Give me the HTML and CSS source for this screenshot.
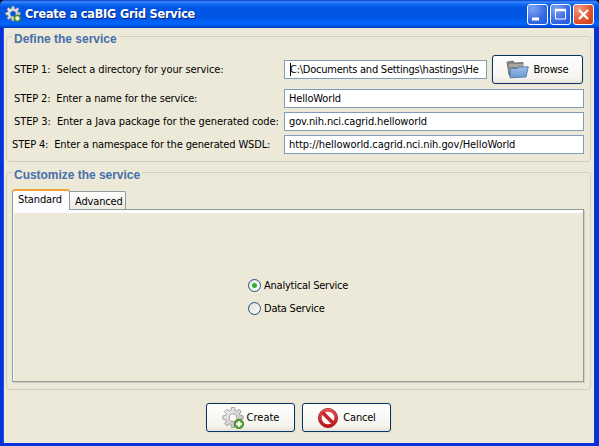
FILE: index.html
```html
<!DOCTYPE html>
<html lang="en">
<head>
<meta charset="utf-8">
<title>Create a caBIG Grid Service</title>
<link rel="stylesheet" href="styles.css">
</head>
<body>
<svg width="0" height="0" class="defs" aria-hidden="true">
  <defs>
    <linearGradient id="metal" x1="0" y1="0" x2="1" y2="1"><stop offset="0" stop-color="#fafafa"/><stop offset="1" stop-color="#b4b4b4"/></linearGradient>
    <linearGradient id="blue" x1="0" y1="0" x2="0" y2="1"><stop offset="0" stop-color="#9dbfe6"/><stop offset="1" stop-color="#6b9bd2"/></linearGradient>
    <linearGradient id="red" x1="0" y1="0" x2="0" y2="1"><stop offset="0" stop-color="#e2585b"/><stop offset="1" stop-color="#b80f17"/></linearGradient>
    <symbol id="gear" viewBox="0 0 22 22">
      <path d="M9.400 .5h3.200l.4 3 1.600.6 2.400-1.900 2.300 2.300-1.800 2.400.6 1.500 3 .5v3.200l-3 .5-.6 1.500 1.800 2.400-2.300 2.300-2.400-1.900-1.600.7-.4 2.900H9.400l-.4-2.900-1.600-.7L5 18.800l-2.300-2.300 1.800-2.400-.6-1.500-3-.5V8.900l3-.5.6-1.500-1.800-2.400L5 2.200l2.400 1.900L9 3.500zM11 6.800a3.900 3.900 0 1 0 .01 0z" fill="url(#metal)" fill-rule="evenodd" stroke="#8f8f8f" stroke-width=".8"/>
      <circle cx="17" cy="17" r="4.600" fill="#58a62c" stroke="#2f6f12" stroke-width=".8"/>
      <path d="M17 14.200v5.600M14.200 17h5.600" stroke="#fff" stroke-width="2.300"/>
    </symbol>
  </defs>
</svg>
<div class="window">
  <header class="titlebar">
    <svg class="app-icon" viewBox="0 0 22 22"><use href="#gear"/></svg>
    <h1>Create a caBIG Grid Service</h1>
    <div class="controls">
      <span class="ctl"><svg viewBox="0 0 21 21"><path d="M5 15h7" stroke="#fff" stroke-width="3"/></svg></span>
      <span class="ctl"><svg viewBox="0 0 21 21"><path d="M5.500 6.500h10v8.500h-10z" fill="none" stroke="#fff"/><path d="M5 6h11" stroke="#fff" stroke-width="2.500"/></svg></span>
      <span class="ctl close"><svg viewBox="0 0 21 21"><path d="M6 6l9 9M15 6l-9 9" stroke="#fff" stroke-width="2.300"/></svg></span>
    </div>
  </header>
  <main>
    <section class="group define">
      <h2>Define the service</h2>
      <div class="form">
        <label class="s1">STEP 1:&nbsp; Select a directory for your service:</label>
        <div class="picker">
          <div class="field"><i class="caret"></i><span class="f1">C:\Documents and Settings\hastings\He</span></div>
          <div class="btn browse">
            <svg class="folder" viewBox="0 0 23 19"><path d="M1 2l6-1 1.500 2L17 2.500V8L5 17 3 15z" fill="#858585" stroke="#666" stroke-width=".8"/><path d="M3 4l14 0v3H5l-1 6z" fill="#aaa7a1"/><path d="M4.500 8L11 8.500l1-1.500L22.300 6.800 20 17 4 17.800z" fill="url(#blue)" stroke="#456f9f" stroke-width=".8"/></svg>
            <span>Browse</span>
          </div>
        </div>
        <label class="s2">STEP 2:&nbsp; Enter a name for the service:</label>
        <div class="field"><span class="f2">HelloWorld</span></div>
        <label class="s3">STEP 3:&nbsp; Enter a Java package for the generated code:</label>
        <div class="field"><span class="f3">gov.nih.nci.cagrid.helloworld</span></div>
        <label class="s4">STEP 4:&nbsp; Enter a namespace for the generated WSDL:</label>
        <div class="field"><span class="f4">http://helloworld.cagrid.nci.nih.gov/HelloWorld</span></div>
      </div>
    </section>
    <section class="group customize">
      <h2>Customize the service</h2>
      <div class="tabs"><div class="tab active">Standard</div><div class="tab">Advanced</div></div>
      <div class="panel">
        <div class="radio"><i class="dot on"></i><span>Analytical Service</span></div>
        <div class="radio"><i class="dot"></i><span>Data Service</span></div>
      </div>
    </section>
    <footer>
      <div class="btn"><svg class="ic" viewBox="0 0 22 22"><use href="#gear"/></svg><span>Create</span></div>
      <div class="btn cancel"><svg class="ic" viewBox="0 0 22 22"><circle cx="11" cy="11" r="9.600" fill="url(#red)" stroke="#a5171c" stroke-width=".8"/><circle cx="11" cy="11" r="6.300" fill="#fff"/><path d="M5.500 5.500l11 11" stroke="#c9252b" stroke-width="3.800"/></svg><span>Cancel</span></div>
    </footer>
  </main>
</div>
</body>
</html>
```
FILE: styles.css
```css
* { box-sizing: border-box; }
body { margin: 0; font: 11px/14px "DejaVu Sans Condensed", "DejaVu Sans", sans-serif; font-stretch: condensed; color: #000; overflow: hidden; background: #000; }
.defs { position: absolute; }
.window { width: 599px; height: 446px; display: flex; flex-direction: column; border-radius: 5px 5px 0 0; overflow: hidden; background: #0831d9; }
.titlebar { height: 28px; flex: none; display: flex; align-items: center; padding: 0 5px; background: linear-gradient(#0b3fc5 0, #3a8bff 2px, #1269f2 4px, #0054e3 8px, #0055e5 17px, #0066fc 24px, #0047d2 27px, #0038b5 28px); }
.app-icon { width: 16px; height: 16px; }
h1 { margin: 0 0 0 4px; font: bold 12.5px/16px "DejaVu Sans Condensed", "DejaVu Sans", sans-serif; font-stretch: condensed; color: #fff; text-shadow: 1px 1px #0a2478; white-space: nowrap; letter-spacing: -.18px; }
.controls { display: flex; gap: 2px; margin-left: auto; padding-top: 1px; }
.ctl { width: 21px; height: 21px; border: 1px solid #fff; border-radius: 3px; background: radial-gradient(circle at 25% 20%, #7fa5f5, #3569e4 60%, #2058d8); }
.ctl svg { display: block; width: 21px; height: 21px; margin: -1px; }
.close { background: radial-gradient(circle at 25% 20%, #f09a80, #e0522c 60%, #c93b13); }
main { flex: 1; margin: 0 5px 3px 4px; padding: 8px 3px 0 2px; background: #ece9d8; box-shadow: -1px 0 #1759ec, 1px 0 #0839cf; }
.group { border: 1px solid #d0d0bf; border-radius: 4px; }
.define { height: 126px; }
.customize { height: 218px; margin-top: 10px; padding: 0 5px; }
h2 { width: max-content; height: 14px; margin: -5px 0 0 5px; padding: 0 2px; background: #ece9d8; color: #466fab; font: bold 12px/14px "Liberation Sans", Arial, sans-serif; }
.customize h2 { margin-left: 0; letter-spacing: -.03px; }
.form { display: grid; grid-template-columns: 277px 300px; grid-template-rows: 29px 19px 19px 19px; row-gap: 4px; align-items: center; padding-top: 9px; }
.form label { padding-left: 7px; white-space: nowrap; }
.form .s4 { padding-left: 5px; letter-spacing: -.15px; }
.s1 { letter-spacing: -.12px; }
.s2 { letter-spacing: -.14px; }
.s3 { letter-spacing: -.08px; }
.f1 { letter-spacing: -.24px; }
.f2 { letter-spacing: -.15px; }
.f3 { letter-spacing: -.13px; }
.f4 { letter-spacing: -.07px; }
.form > .field { width: 300px; }
.form > :nth-child(n+3) { transform: translateY(1px); }
.picker { display: flex; gap: 5px; align-items: center; }
.picker .field { width: 203px; }
.field { height: 19px; border: 1px solid #7f9db9; background: #fff; padding: 1px 4px 0; line-height: 15px; display: flex; white-space: nowrap; overflow: hidden; }
.caret { width: 1px; height: 13px; margin: 1px -1px 0 1px; background: #000; flex: none; }
.btn { width: 89px; height: 29px; border: 1px solid #0a3468; border-radius: 3px; background: linear-gradient(#fff, #f5f4ee 80%, #e6e3d8); box-shadow: 0 0 0 1px #e4e1d2; display: flex; align-items: center; justify-content: center; gap: 3px; white-space: nowrap; }
.browse { width: 91px; gap: 4px; letter-spacing: -.15px; }
.folder { width: 23px; height: 19px; }
.ic { width: 22px; height: 22px; }
.cancel { gap: 4px; letter-spacing: -.2px; }
.tabs { display: flex; align-items: flex-end; height: 27px; }
.tab { height: 18px; width: 56px; border: 1px solid #919b9c; border-left: 0; border-bottom: 0; border-radius: 0 2px 0 0; background: linear-gradient(#fff, #ebeae1); padding: 2px 0 0 5px; line-height: 15px; letter-spacing: -.15px; }
.active { width: 58px; height: 21px; margin-bottom: -1px; border-left: 1px solid #919b9c; border-top: 2px solid #f0a430; border-radius: 3px 3px 0 0; background: #fcfcfe; position: relative; padding-top: 1px; }
.panel { height: 173px; width: 572px; border: 1px solid #919b9c; background: #ece9d8; box-shadow: inset 0 3px #fcfcfe, inset 1px 0 #fcfcfe, 1px 1px #d0cebf; padding: 69px 0 0 235px; }
.radio { display: flex; align-items: center; gap: 3px; height: 13px; margin-bottom: 10px; white-space: nowrap; letter-spacing: -.23px; }
.dot { width: 13px; height: 13px; border: 1px solid #1c5180; border-radius: 50%; background: linear-gradient(135deg, #dcdcd6, #fff); }
.on { background: radial-gradient(circle, #22a522 0, #36b336 2px, transparent 3px), linear-gradient(135deg, #e4e4de, #fff); }
footer { display: flex; justify-content: center; gap: 7px; margin-top: 13px; }
```
